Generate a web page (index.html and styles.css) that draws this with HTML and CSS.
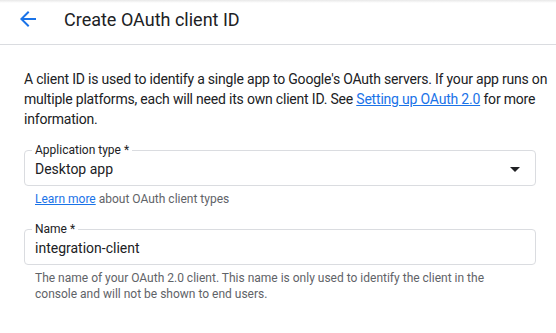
FILE: index.html
```html
<!DOCTYPE html>
<html lang="en">
<head>
    <meta charset="UTF-8">
    <meta name="viewport" content="width=device-width, initial-scale=1.0">
    <title>Create OAuth client ID</title>
    <link rel="stylesheet" href="styles.css">
</head>
<body>
    <header class="page-header">
        <a class="back-link" href="#" aria-label="Back">
            <svg width="24" height="24" viewBox="0 0 24 24"><path d="M20 11H7.83l5.59-5.59L12 4l-8 8 8 8 1.41-1.41L7.83 13H20v-2z" fill="#1a73e8"/></svg>
        </a>
        <h1>Create OAuth client ID</h1>
    </header>
    <main class="content">
        <p class="intro">
            A client ID is used to identify a single app to Google's OAuth servers. If your app runs on
            multiple platforms, each will need its own client ID. See <a href="#">Setting up OAuth 2.0</a> for more
            information.
        </p>

        <fieldset class="field">
            <legend>Application type *</legend>
            <div class="select-row">
                <span>Desktop app</span>
                <svg width="10" height="5" viewBox="0 0 10 5"><path d="M0 0h10L5 5z" fill="#202124"/></svg>
            </div>
        </fieldset>
        <p class="hint"><a href="#">Learn more</a> about OAuth client types</p>

        <fieldset class="field field-name">
            <legend>Name *</legend>
            <div class="input-row">integration-client</div>
        </fieldset>
        <p class="hint">
            The name of your OAuth 2.0 client. This name is only used to identify the client in the
            console and will not be shown to end users.
        </p>
    </main>
</body>
</html>
```

FILE: styles.css
```css
body {
    margin: 0;
    font-family: Roboto, "Liberation Sans", Arial, sans-serif;
    color: #202124;
    background: #fff;
}

.page-header {
    display: flex;
    align-items: center;
    height: 38px;
    padding-bottom: 6px;
    border-bottom: 1px solid #dadce0;
    background: linear-gradient(#e8e8e8, #fff 3px);
}

    .back-link {
        display: flex;
        margin-left: 16px;
        width: 24px;
        height: 24px;
    }

    .page-header h1 {
        margin: 0 0 0 24px;
        font-size: 18px;
        font-weight: 400;
    }

.content {
    padding: 0 0 0 24px;
}

.intro {
    margin: 24px 0 14px;
    font-size: 14px;
    line-height: 20px;
    letter-spacing: -0.2px;
}

a {
    color: #1a73e8;
    text-decoration: underline;
}

.field {
    margin: 0 20px 0 0;
    padding: 2px 10px 6px;
    border: 1px solid #dadce0;
    border-radius: 4px;
}

    .field legend {
        margin-left: -3px;
        padding: 0 3px;
        font-size: 12px;
        line-height: 14px;
    }

.field-name {
    margin-top: 15px;
}

.select-row {
    display: flex;
    justify-content: space-between;
    align-items: center;
    padding-right: 5px;
    font-size: 14px;
    line-height: 20px;
}

.input-row {
    font-size: 14px;
    line-height: 20px;
}

.hint {
    margin: 5px 0 0;
    padding-left: 11px;
    padding-right: 40px;
    font-size: 12px;
    line-height: 16px;
    color: #5f6368;
}
```
